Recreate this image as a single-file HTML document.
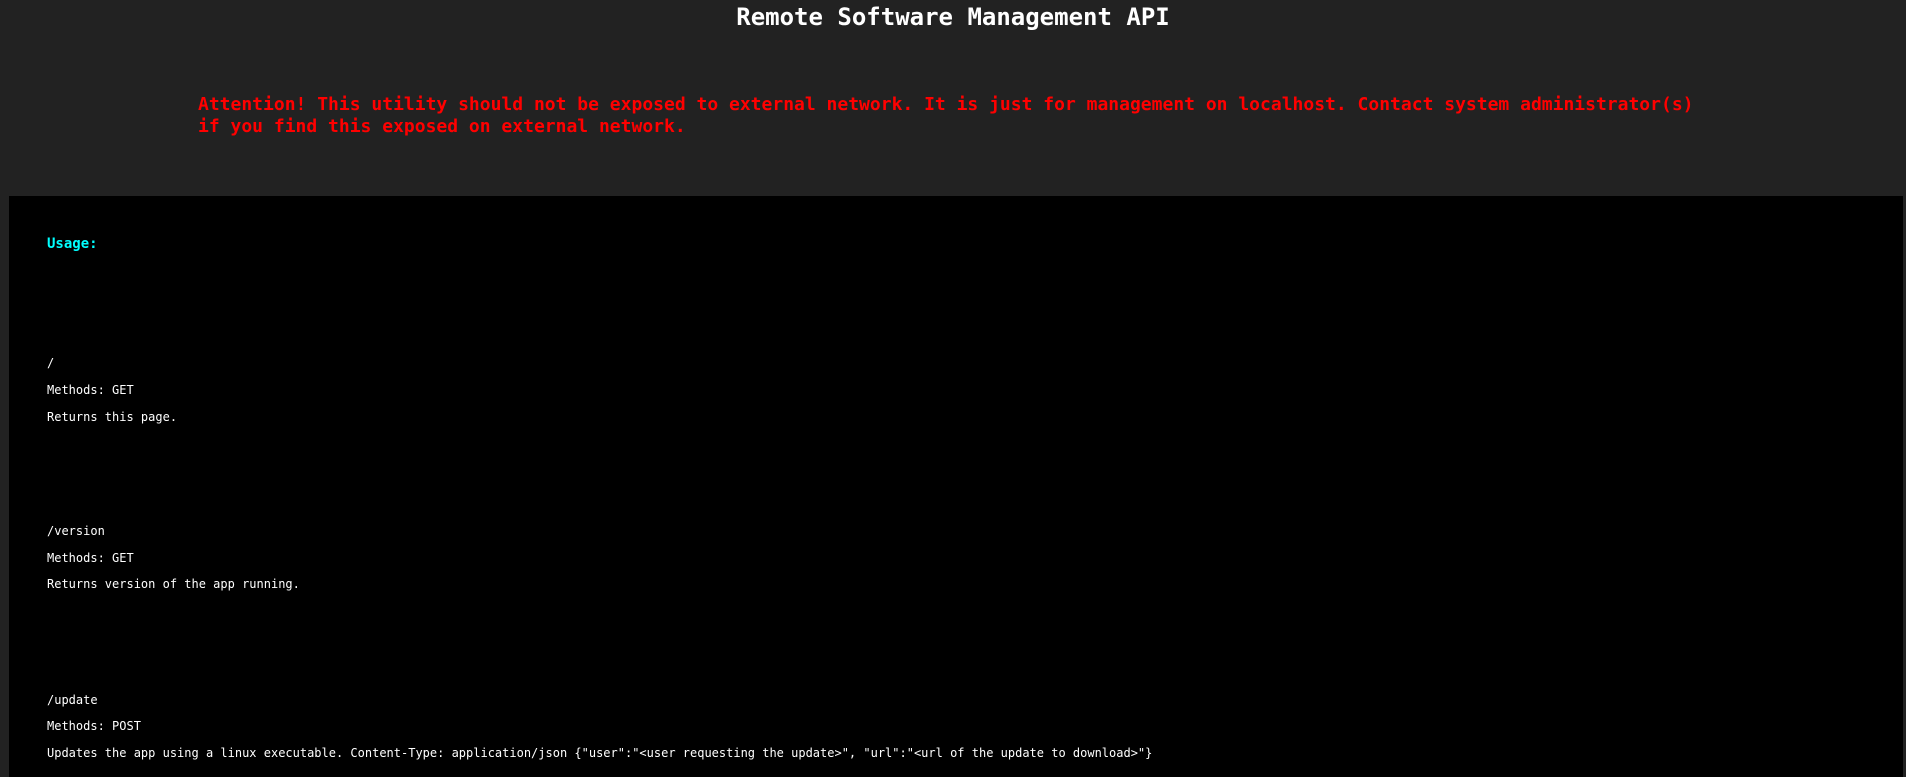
<!DOCTYPE html>
<html><head><style>
html,body{margin:0;padding:0;width:1906px;height:777px;overflow:hidden;background:#222;font-family:"DejaVu Sans Mono","Liberation Mono",monospace;}
.a{position:absolute;white-space:pre;line-height:1;}
#box{position:absolute;left:9px;top:196px;width:1894px;height:581px;background:#000;}
.s{font-size:12px;color:#fff;}
</style></head><body>
<div class="a" style="left:0;width:1906px;text-align:center;top:5px;font-size:24px;font-weight:bold;color:#fff;">Remote Software Management API</div>
<div class="a" style="left:198px;top:96px;font-size:18px;font-weight:bold;color:#f00;">Attention! This utility should not be exposed to external network. It is just for management on localhost. Contact system administrator(s)</div>
<div class="a" style="left:198px;top:118px;font-size:18px;font-weight:bold;color:#f00;">if you find this exposed on external network.</div>
<div id="box"></div>
<div class="a" style="left:47px;top:237px;font-size:14px;font-weight:bold;color:#0ff;">Usage:</div>
<div class="a s" style="left:47px;top:357px;">/</div>
<div class="a s" style="left:47px;top:384px;">Methods: GET</div>
<div class="a s" style="left:47px;top:411px;">Returns this page.</div>
<div class="a s" style="left:47px;top:525px;">/version</div>
<div class="a s" style="left:47px;top:552px;">Methods: GET</div>
<div class="a s" style="left:47px;top:578px;">Returns version of the app running.</div>
<div class="a s" style="left:47px;top:694px;">/update</div>
<div class="a s" style="left:47px;top:720px;">Methods: POST</div>
<div class="a s" style="left:47px;top:747px;">Updates the app using a linux executable. Content-Type: application/json {"user":"&lt;user requesting the update&gt;", "url":"&lt;url of the update to download&gt;"}</div>
</body></html>
